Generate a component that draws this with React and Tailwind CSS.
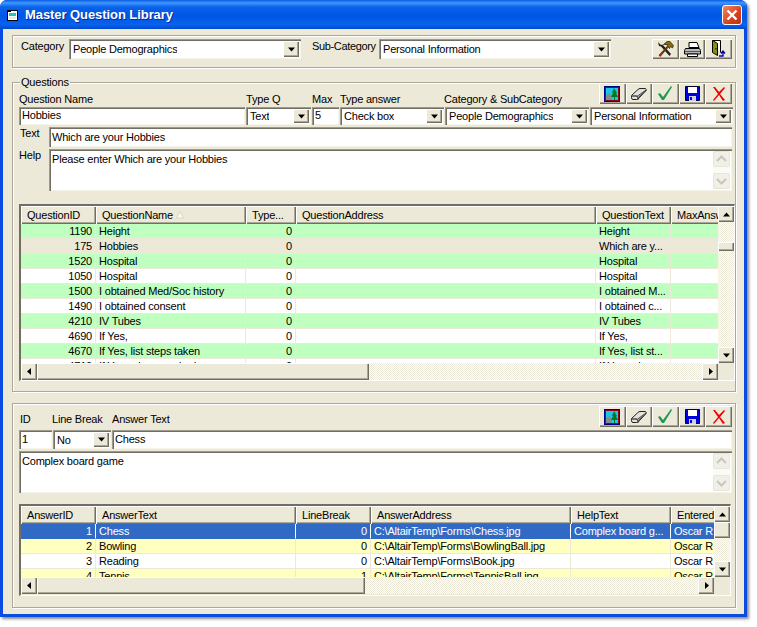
const raised = "bg-[#ece9d8] shadow-[inset_1px_1px_#fff,inset_-1px_-1px_#716f64,inset_-2px_-2px_#aca899]";
const sunken = "bg-white shadow-[inset_1px_1px_#9d9b8e,inset_2px_2px_#716f64,inset_-1px_-1px_#f5f4ea]";
const hatch = "bg-[repeating-conic-gradient(#fff_0_25%,#ece9d8_0_50%)] bg-[length:2px_2px]";

function Tri({ dir = "down" }) {
  const d = {
    down: "M1 2.500h7L4.500 6.500z",
    up: "M4.500 2.500L8 6.500H1z",
    left: "M6 1v7L2 4.500z",
    right: "M3 1l4 3.500L3 8z",
  }[dir];
  return (
    <svg width="9" height="9" viewBox="0 0 9 9">
      <path d={d} fill="#000" />
    </svg>
  );
}

function Combo({ value, width, pad = "" }) {
  return (
    <div className={`flex h-full shrink-0 items-center justify-between p-[2px] ${sunken} ${width}`}>
      <span className={`truncate pl-[2px] ${pad}`}>{value}</span>
      <div className={`flex h-full w-[16px] shrink-0 items-center justify-center ${raised}`}>
        <Tri />
      </div>
    </div>
  );
}

function Field({ value, className, pad = "pt-[2px]" }) {
  return <div className={`shrink-0 px-[3px] ${pad} ${sunken} ${className}`}>{value}</div>;
}

function Chevron({ up }) {
  return (
    <svg width="11" height="8" viewBox="0 0 11 8">
      <path d={up ? "M1 6l4.500-4.500L10 6" : "M1 2l4.500 4.500L10 2"} fill="none" stroke="#c9c7ba" strokeWidth="2" />
    </svg>
  );
}

function FadedScroll() {
  return (
    <div className="flex h-full w-[17px] shrink-0 flex-col justify-between bg-[#fbfaf6]">
      <div className="flex h-[16px] items-center justify-center rounded-[2px] border border-[#e8e6da] bg-[#f1f0e6]">
        <Chevron up />
      </div>
      <div className="flex h-[16px] items-center justify-center rounded-[2px] border border-[#e8e6da] bg-[#f1f0e6]">
        <Chevron />
      </div>
    </div>
  );
}

function TextBox({ value, className }) {
  return (
    <div className={`flex shrink-0 justify-between p-[2px] ${sunken} ${className}`}>
      <span className="pl-[1px] pt-[2px]">{value}</span>
      <FadedScroll />
    </div>
  );
}

function ToolsIcon() {
  return (
    <svg width="17" height="16" viewBox="0 0 17 16">
      <path d="M1 1l3 3 1.500-.5L14 13l-1.500 2L4 5.500 2 5z" fill="#222" />
      <path d="M2.500 15l8-9" stroke="#5a3a08" strokeWidth="2" />
      <path d="M2.500 15l2.500-3" stroke="#b3261e" strokeWidth="2" />
      <path d="M6.500 3.500L10 .5h3l3.500 4-1 2.500-2-1.500-1 2-2.500-2.500 1-1.500z" fill="#8a6a10" stroke="#2e2200" strokeWidth="0.7" />
    </svg>
  );
}

function PrinterIcon() {
  return (
    <svg width="17" height="15" viewBox="0 0 17 15">
      <path d="M5 .5h8l2 5H5z" fill="#fff" stroke="#000" />
      <path d="M1.500 6.500h14l1 2v3.500H.5V8.500z" fill="#b8b8b8" stroke="#000" />
      <path d="M1 9.500h15" stroke="#555" />
      <path d="M3.500 12h10v2.500h-10z" fill="#fff" stroke="#000" />
      <path d="M12 7.500h3" stroke="#e8d200" />
    </svg>
  );
}

function DoorIcon() {
  return (
    <svg width="15" height="18" viewBox="0 0 15 18">
      <path d="M1.500 .5h8v12" fill="#fff" stroke="#000" />
      <path d="M1.500 .5l5 3v12l-5-3z" fill="#8c8c14" stroke="#000" />
      <path d="M5 8v1.500" stroke="#000" />
      <path d="M8 16h4v-3M10 13.500l2-2.500 2 2.500" fill="none" stroke="#0000b0" strokeWidth="1.300" />
    </svg>
  );
}

function PictureIcon() {
  return (
    <svg width="16" height="16" viewBox="0 0 16 16">
      <rect width="16" height="16" fill="#000080" />
      <rect x="1" y="1" width="14" height="14" fill="#900020" />
      <rect x="2" y="2" width="12" height="12" fill="#18c8e8" />
      <path d="M2 14V9l3-2 3 3v4z" fill="#7f8f8f" />
      <path d="M10 2l3 5h-1l2 4h-3v3h-1v-3H7l2-4H8z" fill="#007a20" />
    </svg>
  );
}

function EraserIcon() {
  return (
    <svg width="16" height="12" viewBox="0 0 16 12">
      <path d="M.5 7.500L7 1.500Q8 .5 9 .5h5.500q1 .5 .5 2L8.500 9.500q-1 2-3 2H2q-1.500 0-1.500-2z" fill="#e2e2de" stroke="#222" />
      <path d="M1 8h5l1 3.500L8 9l7-6.500L15 2 6.500 8z" fill="#a8a8a4" stroke="#222" strokeWidth="0.7" />
    </svg>
  );
}

function CheckIcon() {
  return (
    <svg width="14" height="15" viewBox="0 0 14 15">
      <path d="M0 8l2-1 3 4L13 0l1 1-8 13H4z" fill="#1f9a50" />
    </svg>
  );
}

function SaveIcon() {
  return (
    <svg width="15" height="15" viewBox="0 0 15 15">
      <path d="M.5 .5h14v14H.5z" fill="#0000d8" stroke="#000030" />
      <rect x="3" y="1" width="9" height="6" fill="#fff" />
      <rect x="4" y="10" width="7" height="5" fill="#cfd0e0" />
      <rect x="5" y="11" width="2" height="3" fill="#0000d8" />
    </svg>
  );
}

function RedXIcon() {
  return (
    <svg width="14" height="14" viewBox="0 0 14 14">
      <path d="M1 0l2 0 4 5 5-5 1 1-5 6 5 6-2 1-4-6-5 6-1-1 5-6z" fill="#f00000" />
    </svg>
  );
}

function IconBtn({ children }) {
  return <div className={`flex h-full flex-1 items-center justify-center ${raised}`}>{children}</div>;
}

function RecordTools({ className = "" }) {
  return (
    <div className={`ml-auto mr-[3px] flex h-[21px] w-[133px] shrink-0 ${className}`}>
      <IconBtn><PictureIcon /></IconBtn>
      <IconBtn><EraserIcon /></IconBtn>
      <IconBtn><CheckIcon /></IconBtn>
      <IconBtn><SaveIcon /></IconBtn>
      <IconBtn><RedXIcon /></IconBtn>
    </div>
  );
}

function ScrollBtn({ dir, className = "" }) {
  return (
    <div className={`flex shrink-0 items-center justify-center ${raised} ${className}`}>
      <Tri dir={dir} />
    </div>
  );
}

function DataGrid({ columns, rows, className, bodyHeight, thumbTop, thumbHeight, hThumb, tint, tintOn }) {
  return (
    <div className={`shrink-0 border-l-2 border-t-2 border-l-[#716f64] border-t-[#716f64] border-r border-b border-r-white border-b-white ${className}`}>
      <div className={`flex ${bodyHeight}`}>
        <div className="min-w-0 flex-1 overflow-hidden">
          <div className="flex h-[18px]">
            {columns.map((c) => (
              <div key={c.name} className={`flex shrink-0 items-center overflow-hidden whitespace-nowrap pl-[6px] ${raised} ${c.width}`}>
                {c.name}
                {c.sorted && (
                  <svg className="ml-[3px]" width="8" height="8" viewBox="0 0 8 8">
                    <path d="M4 .5L7.500 7H.5z" fill="#f9f8f2" stroke="#d0cebf" strokeWidth="0.7" />
                  </svg>
                )}
              </div>
            ))}
          </div>
          {rows.map((r, i) => {
            let bg = i % 2 === tintOn ? tint : "bg-white";
            if (r.current) bg = "bg-[#ece9d8]";
            if (r.selected) bg = "bg-[#316ac5] text-white";
            return (
              <div key={i} className={`flex h-[15px] leading-[14px] ${bg}`}>
                {columns.map((c, j) => (
                  <div
                    key={c.name}
                    className={`shrink-0 overflow-hidden whitespace-nowrap border-b border-r px-[3px] ${r.selected ? "border-r-white border-b-[#316ac5]" : "border-[#ece9d8]"} ${c.width} ${c.right ? "text-right" : ""}`}
                  >
                    {r.cells[j]}
                  </div>
                ))}
              </div>
            );
          })}
        </div>
        <div className={`flex w-[16px] shrink-0 flex-col ${hatch}`}>
          <ScrollBtn dir="up" className="h-[16px]" />
          <div className={thumbTop} />
          <div className={`shrink-0 ${raised} ${thumbHeight}`} />
          <div className="flex-1" />
          <ScrollBtn dir="down" className="h-[16px]" />
        </div>
      </div>
      <div className="flex h-[17px]">
        <div className={`flex min-w-0 flex-1 ${hatch}`}>
          <ScrollBtn dir="left" className="w-[16px]" />
          <div className={`shrink-0 ${raised} ${hThumb}`} />
          <div className="flex-1" />
          <ScrollBtn dir="right" className="w-[16px]" />
        </div>
        <div className="w-[16px] shrink-0 bg-[#ece9d8]" />
      </div>
    </div>
  );
}

const questionCols = [
  { name: "QuestionID", width: "w-[75px]", right: true },
  { name: "QuestionName", width: "w-[150px]", sorted: true },
  { name: "Type...", width: "w-[50px]", right: true },
  { name: "QuestionAddress", width: "w-[300px]" },
  { name: "QuestionText", width: "w-[75px]" },
  { name: "MaxAnswers", width: "w-[60px]" },
];

const questionRows = [
  { cells: ["1190", "Height", "0", "", "Height", ""] },
  { cells: ["175", "Hobbies", "0", "", "Which are y...", ""], current: true },
  { cells: ["1520", "Hospital", "0", "", "Hospital", ""] },
  { cells: ["1050", "Hospital", "0", "", "Hospital", ""] },
  { cells: ["1500", "I obtained Med/Soc history", "0", "", "I obtained M...", ""] },
  { cells: ["1490", "I obtained consent", "0", "", "I obtained c...", ""] },
  { cells: ["4210", "IV Tubes", "0", "", "IV Tubes", ""] },
  { cells: ["4690", "If Yes,", "0", "", "If Yes,", ""] },
  { cells: ["4670", "If Yes, list steps taken", "0", "", "If Yes, list st...", ""] },
  { cells: ["4710", "If Yes, when smoked", "0", "", "If Yes, wh...", ""] },
];

const answerCols = [
  { name: "AnswerID", width: "w-[75px]", right: true },
  { name: "AnswerText", width: "w-[200px]" },
  { name: "LineBreak", width: "w-[75px]", right: true },
  { name: "AnswerAddress", width: "w-[200px]" },
  { name: "HelpText", width: "w-[100px]" },
  { name: "EnteredBy", width: "w-[60px]" },
];

const answerRows = [
  { cells: ["1", "Chess", "0", "C:\\AltairTemp\\Forms\\Chess.jpg", "Complex board g...", "Oscar R"], selected: true },
  { cells: ["2", "Bowling", "0", "C:\\AltairTemp\\Forms\\BowlingBall.jpg", "", "Oscar R"] },
  { cells: ["3", "Reading", "0", "C:\\AltairTemp\\Forms\\Book.jpg", "", "Oscar R"] },
  { cells: ["4", "Tennis", "1", "C:\\AltairTemp\\Forms\\TennisBall.jpg", "", "Oscar R"] },
];

const panel = "ml-[9px] w-[724px] shrink-0 border border-[#aca899] shadow-[inset_1px_1px_#fff,1px_1px_#fff]";

export default function App() {
  return (
    <div className="h-[627px] w-[757px] overflow-hidden bg-white font-['Liberation_Sans',Arial,sans-serif] text-[11px] leading-[13px] tracking-[-0.2px] text-black">
      <div className="flex h-[617px] w-[747px] flex-col overflow-hidden rounded-t-[7px] bg-[#0a4be0] shadow-[2px_2px_3px_#888]">
        <div className="flex h-[29px] shrink-0 items-center bg-[linear-gradient(180deg,#0a5ae6_0%,#3f98fb_10%,#0a62ea_24%,#0056e4_55%,#0862ee_85%,#0048cc_100%)] pl-[7px] pr-[5px]">
          <svg className="mt-[2px]" width="11" height="11" viewBox="0 0 11 11">
            <rect x="0.5" y="0.5" width="10" height="10" fill="#fff" stroke="#000" />
            <rect x="2" y="3" width="7" height="3" fill="#18c8c8" />
            <rect x="2" y="7" width="7" height="2" fill="#e8e8d8" />
            <path d="M0 0h4v2H0z" fill="#000" />
          </svg>
          <span className="ml-[7px] text-[13px] font-bold tracking-[-0.07px] text-white [text-shadow:1px_1px_#0a2a90]">
            Master Question Library
          </span>
          <div className="ml-auto flex h-[20px] w-[20px] items-center justify-center rounded-[3px] border border-white bg-[linear-gradient(135deg,#ef8a68,#d8401c_60%,#c03010)]">
            <svg width="12" height="12" viewBox="0 0 12 12">
              <path d="M1.500 1.500l9 9M10.500 1.500l-9 9" stroke="#fff" strokeWidth="2.400" />
            </svg>
          </div>
        </div>

        <div className="ml-[3px] mr-[3px] flex h-[585px] flex-col bg-[#ece9d8] pt-[6px]">
          <div className={`${panel} flex h-[33px] pt-[3px]`}>
            <div className="flex h-[20px] w-full">
              <span className="ml-[8px] w-[48px] shrink-0 pt-[1px]">Category</span>
              <Combo value="People Demographics" width="w-[232px]" />
              <span className="ml-[11px] w-[67px] shrink-0 whitespace-nowrap pt-[1px] tracking-[-0.35px]">Sub-Category</span>
              <Combo value="Personal Information" width="w-[232px]" />
              <div className="ml-[41px] flex w-[80px] shrink-0">
                <IconBtn><ToolsIcon /></IconBtn>
                <IconBtn><PrinterIcon /></IconBtn>
                <IconBtn><DoorIcon /></IconBtn>
              </div>
            </div>
          </div>

          <div className={`${panel} relative mt-[14px] h-[310px]`}>
            <span className="absolute left-[7px] top-[-7px] bg-[#ece9d8] px-[1px]">Questions</span>
            <div className="flex h-[24px] pl-[6px]">
              <span className="w-[227px] shrink-0 pt-[10px]">Question Name</span>
              <span className="w-[66px] shrink-0 pt-[10px]">Type Q</span>
              <span className="w-[28px] shrink-0 pt-[10px]">Max</span>
              <span className="w-[104px] shrink-0 pt-[10px]">Type answer</span>
              <span className="shrink-0 pt-[10px]">Category &amp; SubCategory</span>
              <RecordTools />
            </div>
            <div className="flex h-[18px] gap-[1px] pl-[6px]">
              <Field value="Hobbies" className="w-[226px]" />
              <Combo value="Text" width="w-[65px]" pad="pt-[1px]" />
              <Field value="5" className="w-[27px]" />
              <Combo value="Check box" width="w-[104px]" pad="pt-[1px]" />
              <Combo value="People Demographics" width="w-[144px]" pad="pt-[1px]" />
              <Combo value="Personal Information" width="w-[143px]" pad="pt-[1px]" />
            </div>
            <div className="mt-[2px] flex h-[20px] pl-[7px]">
              <span className="w-[29px] shrink-0">Text</span>
              <Field value="Which are your Hobbies" className="w-[683px]" pad="pt-[4px]" />
            </div>
            <div className="mt-[2px] flex h-[42px] pl-[6px]">
              <span className="w-[30px] shrink-0">Help</span>
              <TextBox value="Please enter Which are your Hobbies" className="w-[683px]" />
            </div>
            <DataGrid
              className="ml-[6px] mt-[13px] h-[177px] w-[716px]"
              bodyHeight="h-[157px]"
              columns={questionCols}
              rows={questionRows}
              tint="bg-[#bfffbf]"
              tintOn={0}
              thumbTop="h-[20px]"
              thumbHeight="h-[9px]"
              hThumb="w-[332px]"
            />
          </div>

          <div className={`${panel} mt-[11px] h-[205px]`}>
            <div className="flex h-[26px] pl-[7px]">
              <span className="w-[32px] shrink-0 pt-[9px]">ID</span>
              <span className="w-[60px] shrink-0 pt-[9px]">Line Break</span>
              <span className="shrink-0 pt-[9px]">Answer Text</span>
              <RecordTools className="mt-[2px]" />
            </div>
            <div className="flex h-[19px] gap-[1px] pl-[6px]">
              <Field value="1" className="w-[33px]" pad="pt-[3px]" />
              <Combo value="No" width="w-[58px]" pad="pt-[1px]" />
              <Field value="Chess" className="w-[620px]" pad="pt-[3px]" />
            </div>
            <TextBox value="Complex board game" className="ml-[6px] mt-[2px] h-[42px] w-[713px]" />
            <DataGrid
              className="ml-[6px] mt-[11px] h-[92px] w-[712px]"
              bodyHeight="h-[71px]"
              columns={answerCols}
              rows={answerRows}
              tint="bg-[#ffffbf]"
              tintOn={1}
              thumbTop="h-0"
              thumbHeight="h-[16px]"
              hThumb="w-[328px]"
            />
          </div>
        </div>
      </div>
    </div>
  );
}
